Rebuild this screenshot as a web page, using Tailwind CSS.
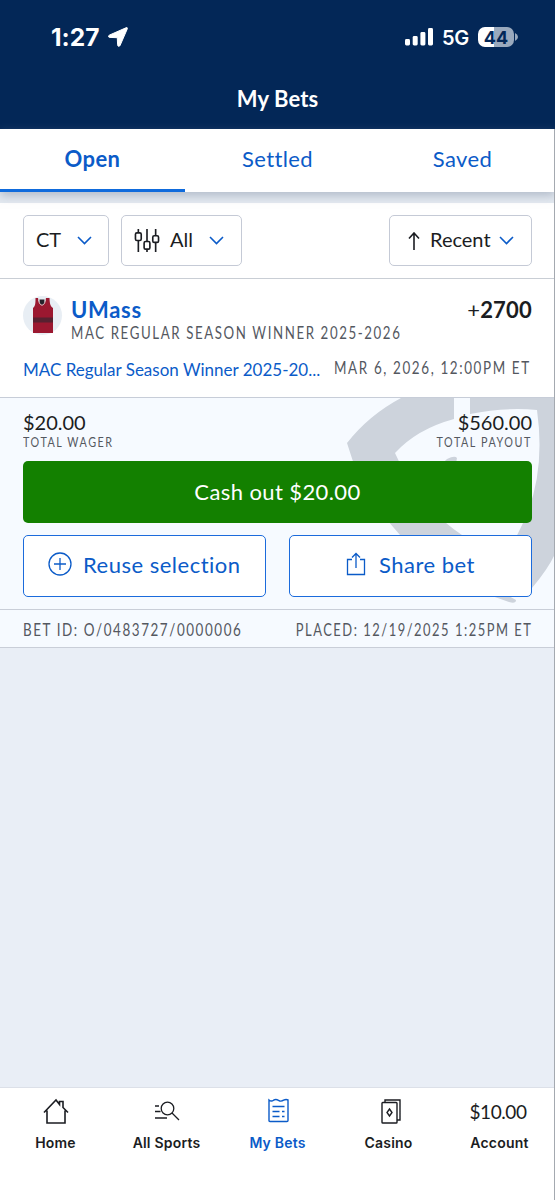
<!DOCTYPE html>
<html lang="en">
<head>
<meta charset="utf-8">
<title>My Bets</title>
<script src="https://cdn.jsdelivr.net/npm/@tailwindcss/browser@4"></script>
</head>
<body class="w-[555px] h-[1200px] overflow-hidden bg-[#e9eef6] font-[Lato,sans-serif] text-[#1b1d22] [font-variant-ligatures:none]">
<div class="relative flex h-[1200px] w-[555px] flex-col whitespace-nowrap">
  <header class="flex h-[129px] flex-col bg-[#032757] text-white">
    <div class="flex h-[74px] items-center pl-[51px] pr-[37px] font-[Inter,sans-serif]">
      <span class="text-[24.5px] font-bold leading-none">1:27</span>
      <svg class="ml-[9px] h-5 w-5" viewBox="0 0 20 20" fill="currentColor" stroke="currentColor" stroke-width="1" stroke-linejoin="round"><path d="M18 .8 1.600 8C-.2 8.900.2 10.300 1.800 10.400L9.300 10.700 9.600 17.800c.1 1.700 1.700 2.100 2.500.6L19.200 2.100C19.700.9 19-.1 18 .8Z"/></svg>
      <svg class="ml-auto h-[18px] w-[29px]" viewBox="0 0 29 18" fill="currentColor"><rect x="0" y="11" width="5" height="6.500" rx="1.400"/><rect x="7.700" y="8" width="5" height="9.500" rx="1.400"/><rect x="15.400" y="4" width="5" height="13.500" rx="1.400"/><rect x="23" y="0" width="5" height="17.500" rx="1.400"/></svg>
      <span class="ml-2 pt-px text-[20px] font-semibold leading-none tracking-[-.3px]">5G</span>
      <div class="ml-[9px] flex h-5 w-9 items-center justify-center rounded-[7px] bg-linear-to-r from-white from-45% to-[#9aa9bd] to-45% pt-px text-[18px] font-bold text-[#032757]">44</div>
      <svg class="ml-px h-2 w-[3px]" viewBox="0 0 3 8"><path d="M0 0Q3 1.500 3 4T0 8Z" fill="#9aa9bd"/></svg>
    </div>
    <h1 class="flex h-[50px] items-center justify-center text-[22px] font-bold leading-none tracking-[.1px]">My Bets</h1>
  </header>

  <nav class="z-10 grid h-[63px] grid-cols-3 bg-white text-center text-[22px] tracking-[.4px] text-[#0b5bc8] shadow-[0_4px_9px_#8592a680]">
    <a class="flex items-center justify-center border-b-[3px] border-[#0f6bdc] pb-[2px] font-bold">Open</a>
    <a class="flex items-center justify-center border-b-[3px] border-transparent pb-[2px]">Settled</a>
    <a class="flex items-center justify-center border-b-[3px] border-transparent pb-[2px]">Saved</a>
  </nav>
  <div class="h-[11px] bg-[#e4eaf1]"></div>

  <section class="flex h-[76px] items-center border-b border-[#c9ced5] bg-white px-[23px] text-xl">
    <button class="flex h-[51px] w-[86px] items-center rounded-[5px] border border-[#c5cad6] pl-[12px]">
      <span class="pb-[3px]">CT</span>
      <svg class="ml-auto mr-[16px] h-[9px] w-[15px]" viewBox="0 0 15 9" fill="none" stroke="#0b5bc8" stroke-width="1.600"><path d="m1 1 6.500 6.500L14 1"/></svg>
    </button>
    <button class="ml-3 flex h-[51px] w-[121px] items-center rounded-[5px] border border-[#c5cad6] pl-3">
      <svg class="h-[25px] w-[26px]" viewBox="0 0 26 26" fill="none" stroke="#1b1d22" stroke-width="1.700"><path d="M4 1v4M4 13v12M13 1v13M13 22v3M22 1v7M22 15v10"/><rect x="1" y="5" width="6" height="8" rx="1.500"/><rect x="10" y="14" width="6" height="8" rx="1.500"/><rect x="19" y="8" width="6" height="7" rx="1.500"/></svg>
      <span class="ml-[10px] pb-[3px]">All</span>
      <svg class="ml-auto mr-[17px] h-[9px] w-[15px]" viewBox="0 0 15 9" fill="none" stroke="#0b5bc8" stroke-width="1.600"><path d="m1 1 6.500 6.500L14 1"/></svg>
    </button>
    <button class="ml-auto flex h-[51px] w-[143px] items-center rounded-[5px] border border-[#c5cad6] pl-[18px]">
      <svg class="h-[18px] w-3" viewBox="0 0 12 18" fill="none" stroke="#1b1d22" stroke-width="1.600"><path d="M6 18V1M1 6.500 6 1l5 5.500"/></svg>
      <span class="ml-[10px] pb-[3px]">Recent</span>
      <svg class="ml-auto mr-[17px] h-[9px] w-[15px]" viewBox="0 0 15 9" fill="none" stroke="#0b5bc8" stroke-width="1.600"><path d="m1 1 6.500 6.500L14 1"/></svg>
    </button>
  </section>

  <section class="flex h-[119px] flex-col border-b border-[#c7cdd8] bg-white px-[23px] pt-[17px]">
    <div class="flex">
      <svg class="-mt-px h-10 w-10" viewBox="0 0 40 40"><circle cx="19.500" cy="20.500" r="19.500" fill="#e8eef4"/><path d="M12.500 3h3c0 8 7 8 7 0h4c.3 6 .8 8 3.500 10v25H10V13c2.300-2 2.500-4 2.500-10Z" fill="#9b1830"/><path d="M10 22.500h20v5H10Z" fill="#572130"/><path d="M16.500 4.500h5v3c-1 3-4 3-5 0Z" fill="#25222a"/><path d="M15.500 3c0 9.500 7 9.500 7 0" fill="none" stroke="#e4d9dd" stroke-width="1"/></svg>
      <div class="ml-[8px] flex flex-col">
        <span class="text-[22px] font-bold leading-[28px] tracking-[.7px] text-[#0b5bc8]">UMass</span>
        <span class="w-0 origin-left scale-x-78 pt-px text-[17px] leading-[16px] tracking-[2.05px] text-[#54585f]">MAC REGULAR SEASON WINNER 2025-2026</span>
      </div>
      <span class="ml-auto text-[22px] font-bold leading-[28px] tracking-[.2px]"><span class="font-normal">+</span>2700</span>
    </div>
    <div class="mt-[14px] flex h-6 items-center justify-between">
      <span class="pt-[5px] text-[17px] text-[#0b5bc8]">MAC Regular Season Winner 2025-20...</span>
      <span class="w-[198px] origin-left scale-x-79 pt-[2px] text-[17px] tracking-[2.05px] text-[#54585f]">MAR 6, 2026, 12:00PM ET</span>
    </div>
  </section>

  <section class="relative flex h-[212px] flex-col border-b border-[#c9ced8] bg-[#f6faff] px-[23px] pt-[13px]">
    <svg class="absolute left-0 top-0 h-[210px] w-[555px]" viewBox="0 398 555 210" fill="#cdd3dc"><path d="M401 398Q369 415 347 443Q360 491 400 535Q438 579 509 602Q516 604 516 600L500 591Q488 570 462 535Q417 505 395 453Q417 429 454 419V398Z"/><path d="M470 398V414Q505 407 537 410Q546 474 523 523L500 570 532 588Q548 569 555 554V398Z"/><path d="M430 475 447 459Q455 455 457 458L454 475Z"/></svg>
    <div class="relative flex justify-between">
      <div class="flex flex-col"><span class="text-xl leading-[22px]">$20.00</span><span class="origin-left scale-x-77 text-sm leading-[18px] tracking-[2px] text-[#54585f]">TOTAL WAGER</span></div>
      <div class="flex flex-col items-end"><span class="text-xl leading-[22px]">$560.00</span><span class="origin-right scale-x-77 text-sm leading-[18px] tracking-[2px] text-[#54585f]">TOTAL PAYOUT</span></div>
    </div>
    <button class="relative mt-[10px] h-[62px] shrink-0 rounded-[5px] bg-[#138000] pb-[2px] text-[22px] tracking-[.4px] text-white">Cash out $20.00</button>
    <div class="relative mt-[12px] grid grid-cols-2 gap-[23px] text-[22px] tracking-[.5px] text-[#0b5bc8]">
      <button class="flex h-[62px] items-center rounded-[5px] border-[1.5px] border-[#1b6bdc] bg-white pl-6">
        <svg class="mb-[5px] h-6 w-6" viewBox="0 0 24 24" fill="none" stroke="currentColor" stroke-width="1.300"><circle cx="12" cy="12" r="11"/><path d="M12 6v12M6 12h12"/></svg>
        <span class="ml-[11px] pb-[3px]">Reuse selection</span>
      </button>
      <button class="flex h-[62px] items-center rounded-[5px] border-[1.5px] border-[#1b6bdc] bg-white pl-14">
        <svg class="mb-[5px] h-6 w-5" viewBox="0 0 20 24" fill="none" stroke="currentColor" stroke-width="1.300"><path d="M6 7.500H1.500v15h17v-15H14M10 16V2M6 5.500 10 1.500l4 4"/></svg>
        <span class="ml-[13px] pb-[3px]">Share bet</span>
      </button>
    </div>
  </section>

  <section class="flex h-[38px] items-center justify-between border-b border-[#c9ced8] bg-[#f6faff] px-[23px] pt-[3px] text-[17px] tracking-[2px] text-[#54585f]">
    <span class="w-0 origin-left scale-x-79">BET ID: O/0483727/0000006</span>
    <span class="origin-right scale-x-76">PLACED: 12/19/2025 1:25PM ET</span>
  </section>

  <main class="flex-1"></main>

  <footer class="grid h-[113px] grid-cols-5 border-t border-[#dce0e8] bg-white pt-[9px] font-[Inter,sans-serif] text-[14px] leading-[20px] font-semibold tracking-[.2px]">
    <a class="flex flex-col items-center gap-[8px]"><svg class="h-[28px] w-[26px]" viewBox="0 0 26 28" fill="none" stroke="currentColor" stroke-width="1.600"><path d="M1 15.500 13 3l3.500 4.500V4.500H20v6l5 5M4 13.500V26h18V13.500"/></svg><span>Home</span></a>
    <a class="flex flex-col items-center gap-[8px]"><svg class="h-[28px] w-[26px]" viewBox="0 0 26 28" fill="none" stroke="currentColor" stroke-width="1.300"><circle cx="13.500" cy="11.500" r="6.300"/><path d="m18 16 7 7M1 9h4M1 14.500h5.500M1 21h12"/></svg><span>All Sports</span></a>
    <a class="flex flex-col items-center gap-[8px] text-[#0b5bc8]"><svg class="h-[28px] w-[24px]" viewBox="0 0 24 28" fill="none" stroke="currentColor" stroke-width="1.400"><path d="M3 3Q5.300 5 7.600 3.200Q9.800 1.700 12.500 3.400Q15 5 17.600 3.200Q20 2 22 3V23.500Q22 24.500 21 24.500H4Q3 24.500 3 23.500ZM6.500 9.500h12M6.500 14.500h7M6.500 19.500h7M16 14.500h2.500M16 19.500h2.500"/></svg><span>My Bets</span></a>
    <a class="flex flex-col items-center gap-[8px]"><svg class="ml-[5px] h-[28px] w-[20px]" viewBox="0 0 20 28" fill="none" stroke="currentColor" stroke-width="1.400"><rect x="1" y="5.500" width="15" height="20.500" rx=".8"/><path d="M4 5.500V3h15v20h-3M8.500 12l2.500 3.500L8.500 19 6 15.500Z"/></svg><span>Casino</span></a>
    <a class="flex flex-col items-center gap-[8px]"><span class="-ml-[3px] font-[Lato,sans-serif] text-[19px] font-normal leading-[29px] tracking-[-.4px] -mb-px">$10.00</span><span>Account</span></a>
  </footer>
  <div class="absolute right-0 top-[129px] z-20 h-[1071px] w-px bg-[#a4a9b0]"></div>
</div>
</body>
</html>
